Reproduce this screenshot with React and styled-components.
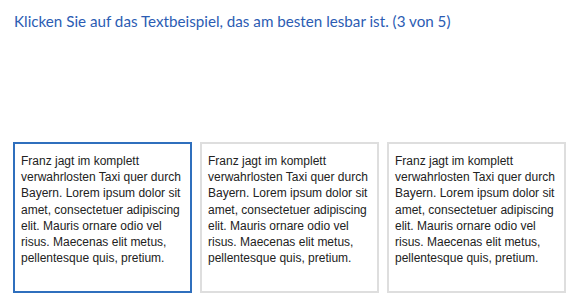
import React from "react";
import styled, { createGlobalStyle } from "styled-components";

const GlobalStyle = createGlobalStyle`
    html, body {
        margin: 0;
        padding: 0;
        background: #ffffff;
    }
    body {
        font-family: "Liberation Sans", Arial, sans-serif;
    }
`;

export const Page = styled('div')`
    width: 580px;
    height: 307px;
    box-sizing: border-box;
    padding: 10px 13px 0 13px;
    display: flex;
    flex-direction: column;
`;

export const Title = styled('h1')`
    margin: 0 0 0 1px;
    font-family: "Lato", "Liberation Sans", sans-serif;
    font-size: 15.2px;
    font-weight: 400;
    line-height: 22px;
    color: #2b5cb3;
`;

export const CardRow = styled('div')`
    margin-top: 110px;
    display: grid;
    grid-template-columns: repeat(3, 179px);
    gap: 8px;
`;

export const Card = styled('div')`
    box-sizing: border-box;
    height: 151px;
    padding: 9px 4px 0 6px;
    border: 2px solid ${({ selected }) => (selected ? "#2f6fbd" : "#dedede")};
    background: #ffffff;
    font-size: 12px;
    line-height: 16.2px;
    color: #222222;
    cursor: pointer;
`;

const sample =
  "Franz jagt im komplett verwahrlosten Taxi quer durch Bayern. Lorem ipsum dolor sit amet, consectetuer adipiscing elit. Mauris ornare odio vel risus. Maecenas elit metus, pellentesque quis, pretium.";

export default function App() {
  return (
    <>
      <GlobalStyle />
      <Page>
        <Title>Klicken Sie auf das Textbeispiel, das am besten lesbar ist. (3 von 5)</Title>
        <CardRow>
          <Card selected>{sample}</Card>
          <Card>{sample}</Card>
          <Card>{sample}</Card>
        </CardRow>
      </Page>
    </>
  );
}
